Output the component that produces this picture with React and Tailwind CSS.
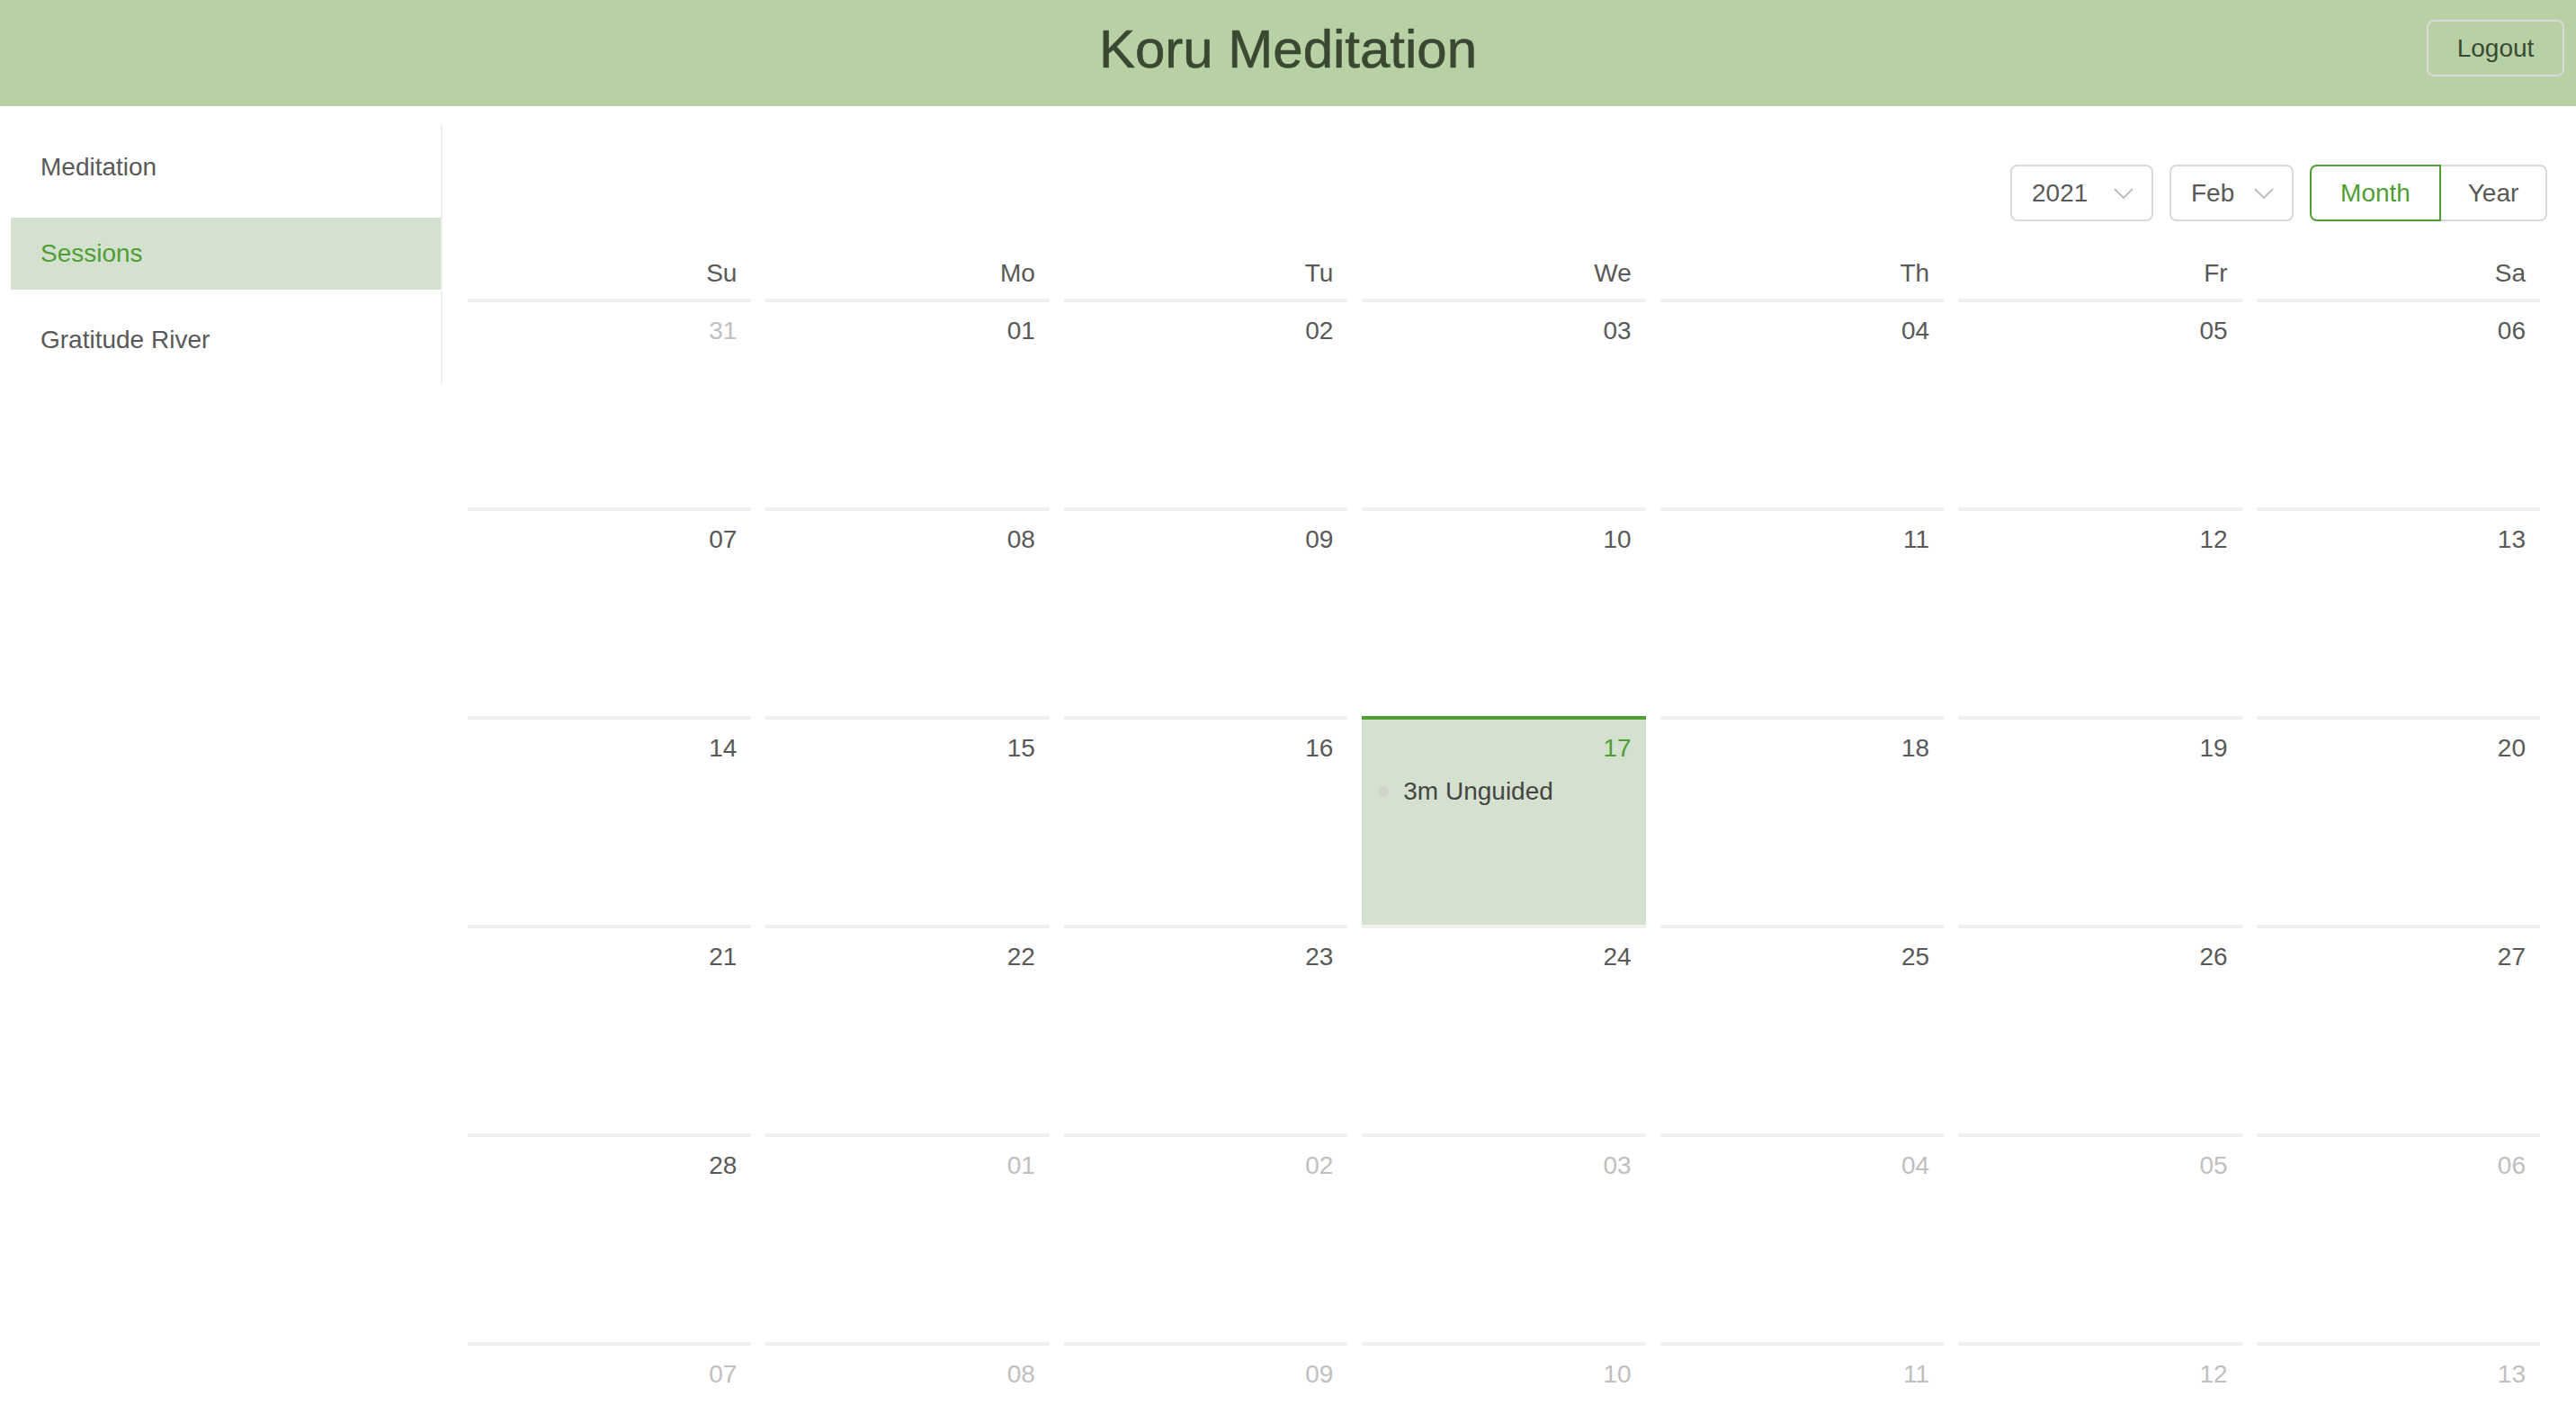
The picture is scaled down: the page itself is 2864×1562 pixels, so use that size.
import React from "react";

const weekdays = ["Su", "Mo", "Tu", "We", "Th", "Fr", "Sa"];

function pad(n) {
  return n < 10 ? "0" + n : "" + n;
}

function buildDays() {
  const days = [];
  days.push({ label: "31", out: true });
  for (let d = 1; d <= 28; d++) days.push({ label: pad(d), out: false, today: d === 17 });
  for (let d = 1; d <= 13; d++) days.push({ label: pad(d), out: true });
  return days;
}

function Chevron() {
  return (
    <svg width="22" height="12" viewBox="0 0 22 12" fill="none">
      <polyline points="1,1 11,11 21,1" stroke="#bfbfbf" strokeWidth="2" fill="none" />
    </svg>
  );
}

function Select({ value, width }) {
  return (
    <div
      className={`${width} h-[63px] border-2 border-[#d9d9d9] rounded-[8px] bg-white flex items-center justify-between pl-[22px] pr-[20px] text-[28px] text-[#595959]`}
    >
      <span>{value}</span>
      <Chevron />
    </div>
  );
}

export default function App() {
  const days = buildDays();
  return (
    <div className="min-h-screen bg-white" style={{ fontFamily: '"Liberation Sans", Arial, sans-serif' }}>
      <header className="h-[118px] bg-[#b7d1a5] grid grid-cols-[1fr_auto_1fr]">
        <div />
        <h1 className="self-center pb-[8px] text-[60px] text-[#3a4832] leading-normal [-webkit-text-stroke:0.6px_#3a4832]">
          Koru Meditation
        </h1>
        <div className="flex justify-end items-start pt-[22px] pr-[13px]">
          <button className="w-[153px] h-[63px] border-2 border-[#d9d9d9] rounded-[8px] text-[28px] text-[#3b4a33] flex items-center justify-center">
            Logout
          </button>
        </div>
      </header>

      <div className="flex">
        <aside className="w-[492px] shrink-0 pl-[12px] pt-[20px]">
          <nav className="border-r-2 border-[#f0f0f0] py-[8px] flex flex-col gap-[16px] text-[28px]">
            <div className="h-[80px] flex items-center pl-[33px] text-[#595959]">Meditation</div>
            <div className="h-[80px] flex items-center pl-[33px] text-[#4f9e35] bg-[#d5e1cf]">Sessions</div>
            <div className="h-[80px] flex items-center pl-[33px] text-[#595959]">Gratitude River</div>
          </nav>
        </aside>

        <main className="flex-1 pl-[20px] pr-[32px] pt-[65px]">
          <div className="flex justify-end items-center h-[63px]">
            <Select value="2021" width="w-[159px]" />
            <div className="ml-[18px]">
              <Select value="Feb" width="w-[138px]" />
            </div>
            <div className="ml-[18px] flex h-[63px] text-[28px]">
              <div className="w-[146px] border-2 border-[#4f9e35] rounded-l-[8px] text-[#4f9e35] flex items-center justify-center">
                Month
              </div>
              <div className="w-[118px] border-y-2 border-r-2 border-[#d9d9d9] rounded-r-[8px] text-[#595959] flex items-center justify-center">
                Year
              </div>
            </div>
          </div>

          <div className="mt-[40px] grid grid-cols-7">
            {weekdays.map((w) => (
              <div key={w} className="h-[46px] pb-[10px] pr-[24px] text-right text-[28px] leading-[36px] text-[#595959]">
                {w}
              </div>
            ))}
            {days.map((d, i) => (
              <div
                key={i}
                className={`mx-[8px] h-[232px] border-t-[4px] pt-[8px] px-[16px] ${
                  d.today ? "border-[#4f9e35] bg-[#d5e1cf]" : "border-[#f0f0f0]"
                }`}
              >
                <div
                  className={`h-[48px] leading-[48px] text-right text-[28px] ${
                    d.today ? "text-[#4f9e35]" : d.out ? "text-[#bfbfbf]" : "text-[#595959]"
                  }`}
                >
                  {d.label}
                </div>
                {d.today && (
                  <ul className="m-0 p-0">
                    <li className="flex items-center h-[48px] text-[28px] text-[#454545]">
                      <span className="block shrink-0 w-[12px] h-[12px] rounded-full bg-[#cfd4cc] mr-[16px] ml-[2px]" />
                      <span>3m Unguided</span>
                    </li>
                  </ul>
                )}
              </div>
            ))}
          </div>
        </main>
      </div>
    </div>
  );
}
